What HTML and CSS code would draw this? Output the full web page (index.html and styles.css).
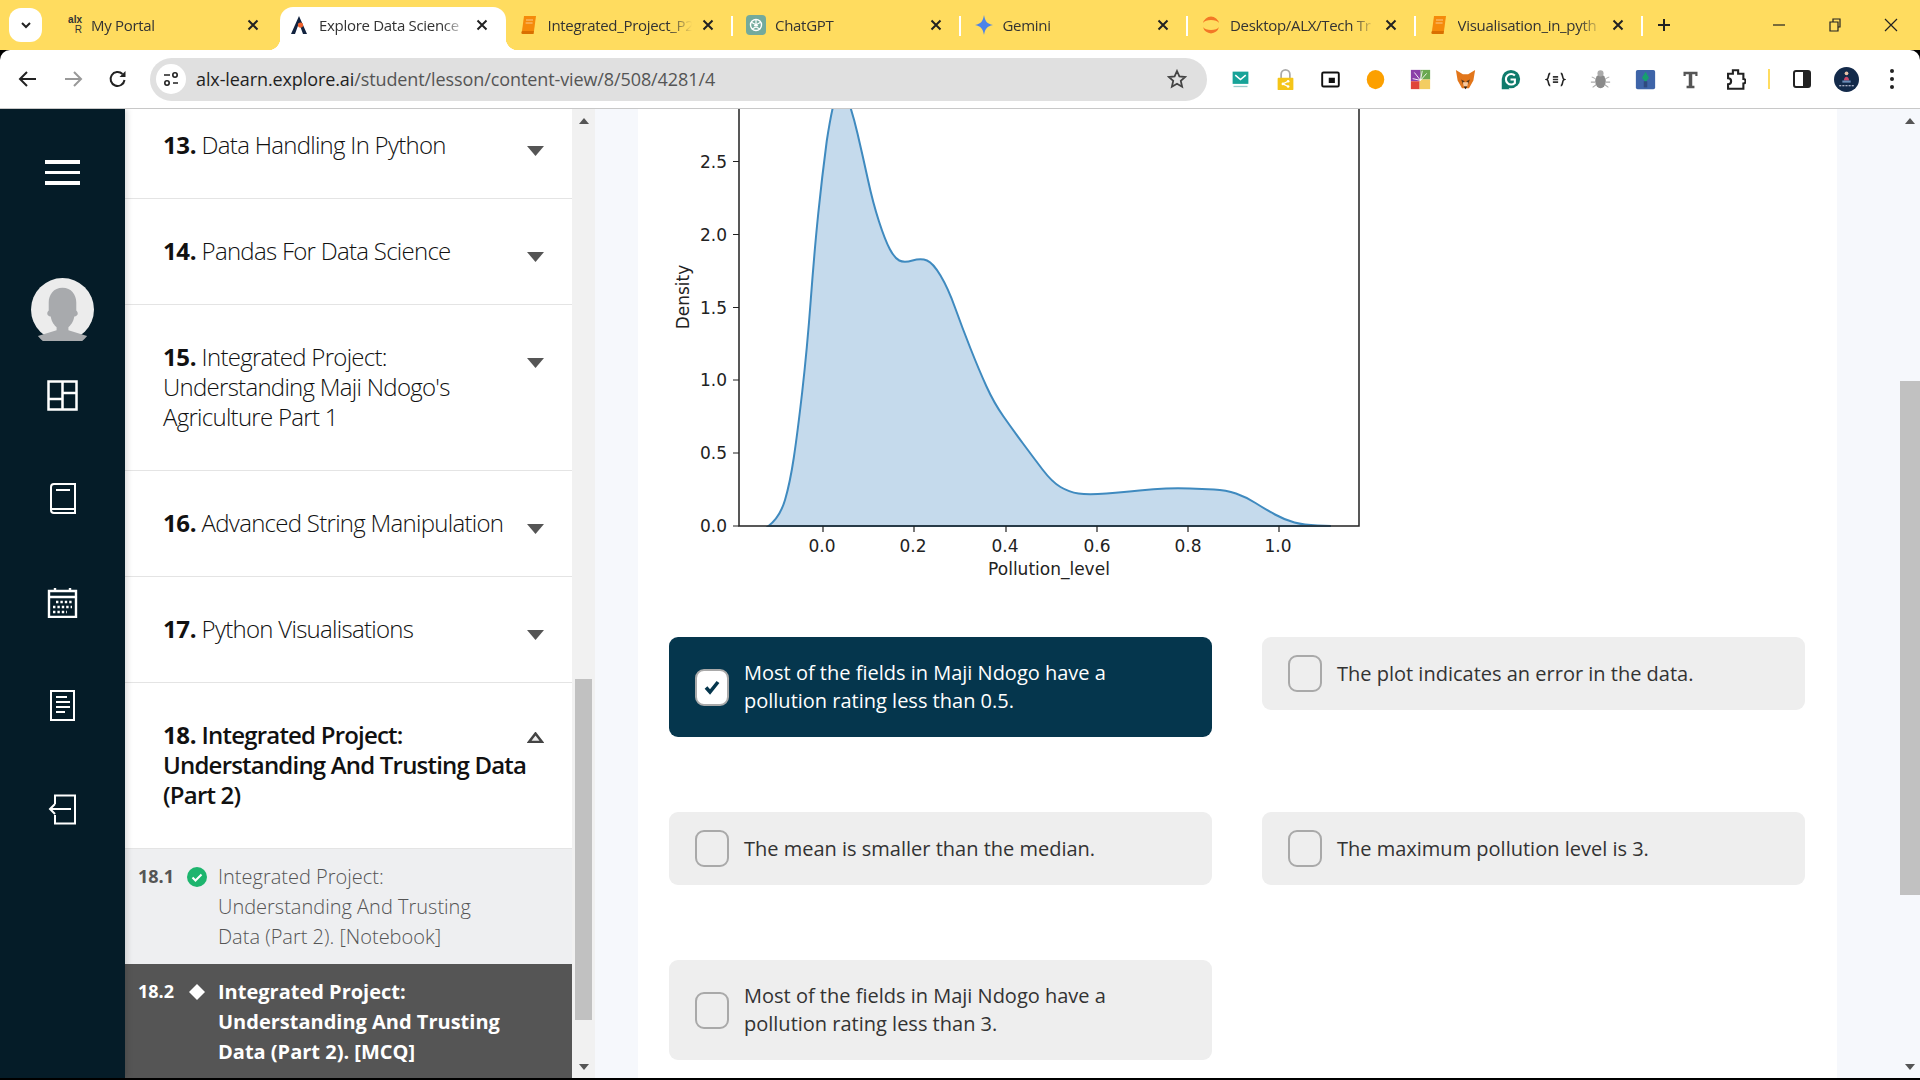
FILE: index.html
```html
<!DOCTYPE html>
<html lang="en">
<head>
  <meta charset="utf-8" />
  <title>Explore Data Science</title>
  <link rel="stylesheet" href="styles.css">
</head>
<body>

  <!-- browser tabs -->
  <div class="tabstrip">
    <div class="tab-search"><svg width="14" height="14" viewBox="0 0 14 14"><path d="M3 5l4 4 4-4" fill="none" stroke="#222" stroke-width="2"/></svg></div>

    <div class="tab tab-first">
      <span class="fav fav-alx"><b>alx</b><i>R</i></span>
      <span class="tab-title">My Portal</span>
      <svg class="tab-x" viewBox="0 0 12 12"><path d="M1.5 1.5l9 9M10.5 1.5l-9 9"/></svg>
    </div>
    <div class="tab tab-active">
      <svg class="fav" viewBox="0 0 20 20"><path d="M10 1L2 19h4l4-11 4 11h4z" fill="#12233f"/><circle cx="11.5" cy="10" r="2.6" fill="#f0622d"/></svg>
      <span class="tab-title">Explore Data Science</span>
      <svg class="tab-x" viewBox="0 0 12 12"><path d="M1.5 1.5l9 9M10.5 1.5l-9 9"/></svg>
    </div>
    <div class="tab">
      <svg class="fav" viewBox="0 0 20 20"><path d="M5 1h12l-2 15H3z" fill="#f58a0b"/><path d="M3 16h12l-.4 3H3.5c-1.2 0-1.6-1.6-.5-3z" fill="#d96f00"/><path d="M7 5h7M6.6 8h7" stroke="#fbc98a" stroke-width="1"/></svg>
      <span class="tab-title">Integrated_Project_P2</span>
      <svg class="tab-x" viewBox="0 0 12 12"><path d="M1.5 1.5l9 9M10.5 1.5l-9 9"/></svg>
    </div>
    <span class="tab-sep"></span>
    <div class="tab">
      <svg class="fav" viewBox="0 0 20 20"><rect x="0" y="0" width="20" height="20" rx="4" fill="#74aa9c"/><circle cx="10" cy="10" r="5.5" fill="none" stroke="#fff" stroke-width="1.4"/><path d="M10 4v8M5 7l7 4M15 7l-7 4M6 14l4-2 4 2" fill="none" stroke="#fff" stroke-width="1.2"/></svg>
      <span class="tab-title">ChatGPT</span>
      <svg class="tab-x" viewBox="0 0 12 12"><path d="M1.5 1.5l9 9M10.5 1.5l-9 9"/></svg>
    </div>
    <span class="tab-sep"></span>
    <div class="tab">
      <svg class="fav" viewBox="0 0 20 20"><path d="M10 0c1 6 3 9 9 10-6 1-8 4-9 10-1-6-3-9-9-10 6-1 8-4 9-10z" fill="#4b83e8"/></svg>
      <span class="tab-title">Gemini</span>
      <svg class="tab-x" viewBox="0 0 12 12"><path d="M1.5 1.5l9 9M10.5 1.5l-9 9"/></svg>
    </div>
    <span class="tab-sep"></span>
    <div class="tab">
      <svg class="fav" viewBox="0 0 20 20"><path d="M2 8a8.2 8.2 0 0 1 16 0c-2-4-14-4-16 0z" fill="#f37726"/><path d="M2 12a8.2 8.2 0 0 0 16 0c-2 4-14 4-16 0z" fill="#f37726"/></svg>
      <span class="tab-title">Desktop/ALX/Tech Tr</span>
      <svg class="tab-x" viewBox="0 0 12 12"><path d="M1.5 1.5l9 9M10.5 1.5l-9 9"/></svg>
    </div>
    <span class="tab-sep"></span>
    <div class="tab">
      <svg class="fav" viewBox="0 0 20 20"><path d="M5 1h12l-2 15H3z" fill="#f58a0b"/><path d="M3 16h12l-.4 3H3.5c-1.2 0-1.6-1.6-.5-3z" fill="#d96f00"/><path d="M7 5h7M6.6 8h7" stroke="#fbc98a" stroke-width="1"/></svg>
      <span class="tab-title">Visualisation_in_pyth</span>
      <svg class="tab-x" viewBox="0 0 12 12"><path d="M1.5 1.5l9 9M10.5 1.5l-9 9"/></svg>
    </div>
    <span class="tab-sep"></span>
    <svg class="tab-plus" viewBox="0 0 14 14"><path d="M7 1v12M1 7h12"/></svg>

    <div class="win-btns">
      <svg viewBox="0 0 14 14"><path d="M1 7h12"/></svg>
      <svg viewBox="0 0 14 14"><path d="M2 4h8v9H2zM5 4V1h7v8h-2"/></svg>
      <svg viewBox="0 0 14 14"><path d="M1 1l12 12M13 1L1 13"/></svg>
    </div>
  </div>

  <!-- address bar -->
  <div class="toolbar">
    <svg class="nav-btn" viewBox="0 0 20 20"><path d="M18 10H3M9 3l-7 7 7 7" fill="none" stroke="#222" stroke-width="2"/></svg>
    <svg class="nav-btn" viewBox="0 0 20 20"><path d="M2 10h15M11 3l7 7-7 7" fill="none" stroke="#999" stroke-width="2"/></svg>
    <svg class="nav-btn" viewBox="0 0 20 20"><path d="M16.5 11a7 7 0 1 1-2-6" fill="none" stroke="#222" stroke-width="2"/><path d="M17.5 2v6h-6z" fill="#222"/></svg>
    <div class="omnibox">
      <span class="site-info"><svg width="18" height="18" viewBox="0 0 18 18"><path d="M2 5h6M11 13h5" stroke="#222" stroke-width="1.6"/><circle cx="13" cy="5" r="2.2" fill="none" stroke="#222" stroke-width="1.6"/><circle cx="5" cy="13" r="2.2" fill="none" stroke="#222" stroke-width="1.6"/></svg></span>
      <span class="url"><span class="url-host">alx-learn.explore.ai</span>/student/lesson/content-view/8/508/4281/4</span>
      <svg class="star" viewBox="0 0 20 20"><path d="M10 2l2.4 5.4 5.8.6-4.4 3.9 1.3 5.8L10 14.7l-5.1 3 1.3-5.8L1.800 8l5.800-.6z" fill="none" stroke="#444" stroke-width="1.8"/></svg>
    </div>
    <div class="exts">
      <svg class="ext" viewBox="0 0 24 24"><rect x="3" y="3" width="18" height="14" fill="#17a398"/><path d="M6 7l6 5 6-5" fill="none" stroke="#fff" stroke-width="1.8"/><path d="M4 20h16" stroke="#9cc" stroke-width="1.5"/></svg>
      <svg class="ext" viewBox="0 0 24 24"><path d="M7 11V6a5 5 0 0 1 10 0v5" fill="none" stroke="#aaa" stroke-width="2"/><rect x="3" y="10" width="18" height="14" rx="1" fill="#f5c518"/><path d="M9 17l6-3M9 17l6 3" stroke="#fff" stroke-width="1.300"/><circle cx="9" cy="17" r="1.500" fill="#fff"/><circle cx="15" cy="14" r="1.500" fill="#fff"/><circle cx="15" cy="20" r="1.500" fill="#fff"/></svg>
      <svg class="ext" viewBox="0 0 24 24"><rect x="2.500" y="4" width="19" height="16" rx="1.500" fill="none" stroke="#111" stroke-width="2.200"/><rect x="10" y="10" width="7" height="6" fill="#111"/></svg>
      <svg class="ext" viewBox="0 0 24 24"><ellipse cx="12" cy="12" rx="10" ry="11" fill="#fca000"/></svg>
      <svg class="ext" viewBox="0 0 24 24"><rect x="1" y="1" width="11" height="13" fill="#8b3fa8"/><rect x="12" y="1" width="11" height="11" fill="#6aa84f"/><rect x="1" y="14" width="10" height="9" fill="#e0453a"/><rect x="11" y="12" width="12" height="11" fill="#f3cd62"/><path d="M12 13L5 4M12 13l2-11M12 13l7-8M12 13L3 11" stroke="#fff" stroke-width="1"/></svg>
      <svg class="ext" viewBox="0 0 24 24"><path d="M1 1l8 5h6l8-5-2 12-5 9h-8l-5-9z" fill="#e2761b"/><path d="M7 12l4 2-2 3zM17 12l-4 2 2 3z" fill="#5a3a1c"/><path d="M9 15h6l-1 5h-4z" fill="#f4c9a0"/><path d="M10 20h4l-2 3z" fill="#222"/></svg>
      <svg class="ext" viewBox="0 0 24 24"><circle cx="12.500" cy="11.500" r="10.500" fill="#0f7b6c"/><path d="M2 12v11h9z" fill="#0f7b6c"/><path d="M17 7.500a6 6 0 1 0 0 8.500v-4h-5" fill="none" stroke="#fff" stroke-width="2.400"/></svg>
      <svg class="ext" viewBox="0 0 24 24"><path d="M6 5C3 5 5 11 2 12c3 1 1 7 4 7M18 5c3 0 1 6 4 7-3 1-1 7-4 7" fill="none" stroke="#222" stroke-width="1.800"/><path d="M9 9h6M9 12h6M9 15h6" stroke="#333" stroke-width="1.800"/></svg>
      <svg class="ext" viewBox="0 0 24 24"><ellipse cx="12" cy="14" rx="6" ry="8" fill="#8a8a8a"/><circle cx="12" cy="5" r="3.500" fill="#aaa"/><path d="M2 9l4 2M22 9l-4 2M1 15h5M23 15h-5M3 21l4-3M21 21l-4-3" stroke="#aaa" stroke-width="1.200"/></svg>
      <svg class="ext" viewBox="0 0 24 24"><rect x="1" y="1" width="22" height="22" rx="2" fill="#3e64a8"/><path d="M12 3l4 7-4 5-4-5z" fill="#16a06e"/><rect x="10" y="14" width="4" height="7" fill="#2f4a7e"/></svg>
      <svg class="ext" viewBox="0 0 24 24"><path d="M4 3h16v5h-2.500V6H14v13h2.500v3h-9v-3H10V6H6.500v2H4z" fill="#555"/></svg>
      <svg class="ext" viewBox="0 0 24 24"><path d="M9 1.500h6v4h6v6a2.500 2.500 0 0 1 0 5v6H3.500v-5a3.500 3.500 0 0 0 0-7v-5H9z" fill="none" stroke="#222" stroke-width="2.400"/></svg>
    </div>
    <span class="ext-sep"></span>
    <svg class="side-panel" viewBox="0 0 18 18"><rect x="1" y="1" width="16" height="16" rx="2" fill="none" stroke="#222" stroke-width="2"/><rect x="10" y="1" width="7" height="16" fill="#222"/></svg>
    <svg class="profile" viewBox="0 0 24 24"><circle cx="12" cy="12" r="12" fill="#132a4a"/><circle cx="12" cy="6" r="1.800" fill="#e8c3a8"/><path d="M9.500 13c0-5 5-5 5 0z" fill="#c9476a"/><path d="M8 13h8v2H8z" fill="#6c8fb8"/><path d="M5 18h14" stroke="#dde" stroke-width="1" stroke-dasharray="2 1"/></svg>
    <svg class="kebab" viewBox="0 0 4 20"><circle cx="2" cy="2" r="2"/><circle cx="2" cy="10" r="2"/><circle cx="2" cy="18" r="2"/></svg>
  </div>

  <div class="app">
    <nav class="sidebar">
      <div class="burger"><span></span><span></span><span></span></div>
      <svg class="avatar" viewBox="0 0 64 64"><circle cx="32" cy="32" r="32" fill="#ececec"/><path d="M32 10c-9 0-14 7-14 15v8c-3 3-1 6 2 6 1 6 4 9 6 11v3L7 59a32 32 0 0 0 50 0l-19-6v-3c2-2 5-5 6-11 3 0 5-3 2-6v-8c0-8-5-15-14-15z" fill="#a8aaad"/></svg>
      <div class="nav-icons">
        <svg viewBox="0 0 31 31"><path d="M1.500 1.500h28v28h-28zM15.500 1.500v28M1.500 19h14M15.500 13h14" fill="none" stroke="#fff" stroke-width="2.500"/></svg>
        <svg viewBox="0 0 31 31"><path d="M4 4a3 3 0 0 1 3-3h21v29H7a3 3 0 0 1-3-3zM4 26h24M9 7h14" fill="none" stroke="#fff" stroke-width="2"/></svg>
        <svg viewBox="0 0 31 31"><path d="M2 4h27v26H2zM2 10h27M8 1v4M23 1v4" fill="none" stroke="#fff" stroke-width="2.400"/><path d="M9 15h16M6 20h19M6 25h14" stroke="#fff" stroke-width="2.400" stroke-dasharray="2.400 2"/></svg>
        <svg viewBox="0 0 31 31"><path d="M4 1h23v29H4zM9 7h11M9 12h14M9 17h14M9 22h9" fill="none" stroke="#fff" stroke-width="2"/></svg>
        <svg viewBox="0 0 31 31"><path d="M8 10V1.500h20v28H8V21M24 15H3M8 10l-5 5 5 5" fill="none" stroke="#fff" stroke-width="2"/></svg>
      </div>
    </nav>

    <aside class="lessons">
      <div class="lesson">
        <div class="lesson-title"><b>13.</b> Data Handling In Python</div>
        <svg class="caret" viewBox="0 0 17 10"><path d="M0 0h17l-8.500 10z"/></svg>
      </div>
      <div class="lesson">
        <div class="lesson-title"><b>14.</b> Pandas For Data Science</div>
        <svg class="caret" viewBox="0 0 17 10"><path d="M0 0h17l-8.500 10z"/></svg>
      </div>
      <div class="lesson">
        <div class="lesson-title"><b>15.</b> Integrated Project: Understanding Maji Ndogo's Agriculture Part 1</div>
        <svg class="caret" viewBox="0 0 17 10"><path d="M0 0h17l-8.500 10z"/></svg>
      </div>
      <div class="lesson">
        <div class="lesson-title"><b>16.</b> Advanced String Manipulation</div>
        <svg class="caret" viewBox="0 0 17 10"><path d="M0 0h17l-8.500 10z"/></svg>
      </div>
      <div class="lesson">
        <div class="lesson-title"><b>17.</b> Python Visualisations</div>
        <svg class="caret" viewBox="0 0 17 10"><path d="M0 0h17l-8.500 10z"/></svg>
      </div>
      <div class="lesson lesson-open">
        <div class="lesson-title"><b>18.</b> Integrated Project: Understanding And Trusting Data (Part 2)</div>
        <svg class="caret caret-up" viewBox="0 0 17 11"><path d="M8.500 1.500L15 10H2z" fill="#eee" stroke="#444" stroke-width="2.500"/></svg>
      </div>
      <div class="sub sub-done">
        <span class="sub-num">18.1</span>
        <svg class="sub-icon" viewBox="0 0 20 20"><circle cx="10" cy="10" r="10" fill="#1db56e"/><path d="M5.500 10.500l3 3 6-6" fill="none" stroke="#fff" stroke-width="2"/></svg>
        <span class="sub-text">Integrated Project: Understanding And Trusting Data (Part 2). [Notebook]</span>
      </div>
      <div class="sub sub-current">
        <span class="sub-num">18.2</span>
        <svg class="sub-icon" viewBox="0 0 20 20"><path d="M10 2l8 8-8 8-8-8z" fill="#fff"/></svg>
        <span class="sub-text">Integrated Project: Understanding And Trusting Data (Part 2). [MCQ]</span>
      </div>
    </aside>
    <div class="scrollbar scrollbar-list">
      <span class="arrow-up"></span>
      <span class="thumb"></span>
      <span class="arrow-down"></span>
    </div>

    <main class="main">
      <section class="panel">
        <svg class="chart" viewBox="638 109 1199 482">
          <path class="kde-fill" d="M768.500 526 Q780 517 785 500 Q790 483 793.750 458 Q797.500 433 802.250 391.500 Q807 350 810.750 300 Q814.500 250 818.250 213.500 Q822 177 826.750 141 Q831.500 110 836 95 Q841 84 846 95 Q852 110 857.500 133.500 Q863 157 868 180 Q873 203 879 221.500 Q885 240 889.750 249 Q894.500 258 899.250 260.500 Q904 263 912.500 260.500 Q921 258 927 260.500 Q933 263 940.500 275.500 Q948 288 955 307.500 Q962 327 970.500 348.500 Q979 370 986.500 386.500 Q994 403 1003.500 416.500 Q1013 430 1023 443.500 Q1033 457 1042.500 469.500 Q1052 482 1060.500 487 Q1069 492 1078.500 493.500 Q1088 495 1106.500 493.500 Q1125 492 1139.500 490.500 Q1154 489 1166 488.500 Q1178 488 1190 488.500 Q1202 489 1214 489.500 Q1226 490 1236 493.500 Q1246 497 1255.500 503 Q1265 509 1275 514.500 Q1285 520 1294.500 522.500 Q1304 525 1317.500 525.500 L1331 526 Z"/>
          <path class="axes" d="M739 109V526H1359V109"/>
          <path class="ticks" d="M733 161.500h6M733 234.500h6M733 307.500h6M733 380h6M733 453h6M733 526h6M823 526v6M914 526v6M1006 526v6M1097 526v6M1188 526v6M1279 526v6"/>
          <g class="tick-y">
            <text x="727" y="167.500">2.5</text>
            <text x="727" y="240.500">2.0</text>
            <text x="727" y="313.500">1.5</text>
            <text x="727" y="386">1.0</text>
            <text x="727" y="459">0.5</text>
            <text x="727" y="532">0.0</text>
          </g>
          <g class="tick-x">
            <text x="822" y="552">0.0</text>
            <text x="913" y="552">0.2</text>
            <text x="1005" y="552">0.4</text>
            <text x="1097" y="552">0.6</text>
            <text x="1188" y="552">0.8</text>
            <text x="1278" y="552">1.0</text>
          </g>
          <text class="axis-label" x="1049" y="575">Pollution_level</text>
          <text class="axis-label" transform="translate(689 297) rotate(-90)">Density</text>
        </svg>

        <div class="answers">
          <div class="answer answer-on">
            <span class="box"><svg width="18" height="18" viewBox="0 0 18 18"><path d="M3 9.500l4 4.500 8-10" fill="none" stroke="#05364d" stroke-width="3.600"/></svg></span>
            <span class="answer-text">Most of the fields in Maji Ndogo have a pollution rating less than 0.5.</span>
          </div>
          <div class="answer">
            <span class="box"></span>
            <span class="answer-text">The plot indicates an error in the data.</span>
          </div>
          <div class="answer">
            <span class="box"></span>
            <span class="answer-text">The mean is smaller than the median.</span>
          </div>
          <div class="answer">
            <span class="box"></span>
            <span class="answer-text">The maximum pollution level is 3.</span>
          </div>
          <div class="answer">
            <span class="box"></span>
            <span class="answer-text">Most of the fields in Maji Ndogo have a pollution rating less than 3.</span>
          </div>
        </div>
      </section>
      <div class="scrollbar scrollbar-main">
        <span class="arrow-up"></span>
        <span class="thumb"></span>
        <span class="arrow-down"></span>
      </div>
    </main>
  </div>

</body>
</html>
```

FILE: styles.css
```css
html, body { margin: 0; padding: 0; }
body { width: 1920px; height: 1080px; overflow: hidden; display: flex; flex-direction: column; background: #000; font-family: 'Open Sans', 'Liberation Sans', Arial, sans-serif; color: #111; }

/* tab strip */
.tabstrip { height: 50px; flex: none; display: flex; align-items: flex-end; background: #ffdc5f; padding-left: 9px; box-sizing: border-box; }
.tab-search { width: 33px; height: 34px; margin-bottom: 8px; margin-right: 6px; background: #fff; border-radius: 12px; display: flex; align-items: center; justify-content: center; }
.tab { width: 225.5px; height: 43px; display: flex; align-items: center; padding: 0 17px 7px 13px; box-sizing: border-box; position: relative; }
.tab-first { width: 232px; padding-left: 14px; padding-right: 21px; }
.tab-active { background: #fff; border-radius: 13px 13px 0 0; padding-left: 9px; padding-right: 18px; }
.tab-active::before, .tab-active::after { content: ""; position: absolute; bottom: 0; width: 12px; height: 12px; }
.tab-active::before { left: -12px; background: radial-gradient(circle at 0 0, #ffdc5f 12px, #fff 12.5px); }
.tab-active::after { right: -12px; background: radial-gradient(circle at 100% 0, #ffdc5f 12px, #fff 12.5px); }
.fav { width: 20px; height: 20px; flex: none; margin-right: 9px; }
.fav-alx { display: flex; flex-direction: column; align-items: flex-end; margin-left: 0; margin-right: 8px; font: 700 10px/10px 'Liberation Sans', Arial, sans-serif; color: #333; }
.fav-alx i { font-style: normal; font-weight: 400; }
.tab-title { flex: 1; min-width: 0; white-space: nowrap; overflow: hidden; font-size: 15px; letter-spacing: -0.3px; color: #333; -webkit-mask-image: linear-gradient(to right, #000 84%, transparent 100%); mask-image: linear-gradient(to right, #000 84%, transparent 100%); }
.tab-first .tab-title, .tab-active .tab-title { margin-left: 1px; }
.tab-x { width: 12px; height: 12px; flex: none; margin-left: 10px; fill: none; stroke: #222; stroke-width: 2; }
.tab-sep { width: 2px; height: 20px; margin-bottom: 14px; background: #fff; flex: none; }
.tab-plus { width: 14px; height: 14px; margin: 0 0 18px 14px; fill: none; stroke: #222; stroke-width: 2; flex: none; }
.win-btns { margin-left: auto; display: flex; gap: 42px; padding-right: 22px; margin-bottom: 18px; }
.win-btns svg { width: 14px; height: 14px; fill: none; stroke: #222; stroke-width: 1.2; }

/* address bar */
.toolbar { height: 59px; flex: none; box-sizing: border-box; display: flex; align-items: center; background: #fff; border-radius: 10px 10px 0 0; border-bottom: 1px solid #c8c8c8; padding: 0 0 0 18px; position: relative; }
.nav-btn { width: 20px; height: 20px; margin-right: 25px; flex: none; }
.nav-btn:nth-child(3) { margin-right: 22px; }
.omnibox { width: 1057px; height: 43px; background: #e0e0e0; border-radius: 22px; display: flex; align-items: center; box-sizing: border-box; padding: 0 20px 0 6px; flex: none; }
.site-info { width: 30px; height: 30px; border-radius: 50%; background: #fff; display: flex; align-items: center; justify-content: center; margin-right: 10px; flex: none; }
.url { flex: 1; font-size: 18px; color: #555; white-space: nowrap; letter-spacing: -0.1px; }
.url-host { color: #1f1f1f; }
.star { width: 20px; height: 20px; flex: none; }
.exts { display: flex; margin-left: 11px; }
.ext { width: 21px; height: 21px; margin: 0 12px; flex: none; }
.ext-sep { width: 1.5px; height: 20px; background: #ffdc5f; margin: 0 23px 0 10px; flex: none; }
.side-panel { width: 18px; height: 18px; flex: none; margin-right: 23px; }
.profile { width: 25px; height: 25px; flex: none; margin-right: 31px; }
.kebab { width: 4px; height: 20px; flex: none; fill: #222; }

/* page */
.app { height: 969px; flex: none; display: flex; background: #f6f8fc; overflow: hidden; }
.sidebar { width: 125px; flex: none; background: #051c28; display: flex; flex-direction: column; align-items: center; padding-top: 51px; box-sizing: border-box; box-shadow: 2px 0 6px rgba(0,0,0,.15); position: relative; }
.burger { width: 35px; display: flex; flex-direction: column; gap: 7px; }
.burger span { height: 3.5px; background: #fff; }
.avatar { width: 63px; height: 63px; margin-top: 93px; }
.nav-icons { display: flex; flex-direction: column; gap: 72.5px; margin-top: 39px; }
.nav-icons svg { width: 31px; height: 31px; display: block; }

/* lesson list */
.lessons { width: 447px; flex: none; background: #fff; overflow: hidden; margin-top: -16px; }
.lesson { display: flex; align-items: flex-start; padding: 37px 28px 38px 38px; border-bottom: 1px solid #e4e4e4; }
.lesson-title { flex: 1; font-size: 24px; line-height: 30px; font-weight: 300; letter-spacing: -0.72px; }
.lesson-title b { font-weight: 700; letter-spacing: -0.4px; }
.caret { width: 17px; height: 10px; flex: none; margin-top: 16px; fill: #555; }
.lesson-open .lesson-title { font-weight: 600; letter-spacing: -0.8px; margin-right: -20px; }
.caret-up { height: 11px; margin-top: 12px; }
.sub { display: flex; align-items: flex-start; padding: 13px 60px 12px 13px; height: 115px; box-sizing: border-box; }
.sub-done { background: #eeeff1; color: #555; }
.sub-current { background: #555; color: #fff; }
.sub-num { width: 49px; flex: none; font-size: 18px; line-height: 28px; font-weight: 700; }
.sub-icon { width: 20px; height: 20px; margin: 5px 11px 0 0; flex: none; }
.sub-text { flex: 1; font-size: 20px; line-height: 30px; font-weight: 300; }
.sub-current .sub-text { font-weight: 700; }

/* scrollbars */
.scrollbar { flex: none; display: flex; flex-direction: column; align-items: center; }
.scrollbar-list { width: 23px; background: #f1f1f1; }
.scrollbar-list .thumb { width: 17px; height: 341px; margin-top: 545px; }
.scrollbar-main { width: 20px; margin-left: 63px; }
.scrollbar-main .thumb { width: 20px; height: 514px; margin-top: 247px; }
.thumb { background: #c1c1c1; display: block; }
.arrow-up, .arrow-down { width: 0; height: 0; border-left: 5px solid transparent; border-right: 5px solid transparent; }
.arrow-up { border-bottom: 6px solid #555; margin-top: 9px; margin-bottom: 10px; }
.arrow-down { border-top: 6px solid #555; margin-top: auto; margin-bottom: 8px; }

/* question */
.main { flex: 1; display: flex; min-width: 0; }
.panel { width: 1199px; margin-left: 43px; background: #fff; flex: none; }
.chart { display: block; width: 1199px; height: 482px; }
.kde-fill { fill: #c5daec; stroke: #3f8abf; stroke-width: 2; }
.axes { fill: none; stroke: #222; stroke-width: 1.5; }
.ticks { fill: none; stroke: #222; stroke-width: 1.2; }
.chart text { font-family: 'DejaVu Sans', sans-serif; font-size: 17px; fill: #222; }
.tick-y text { text-anchor: end; }
.tick-x text { text-anchor: middle; }
.axis-label { text-anchor: middle; }
.answers { display: grid; grid-template-columns: 543px 543px; column-gap: 50px; row-gap: 75px; padding: 46px 32px 0 31px; align-items: start; }
.answer { display: flex; align-items: center; gap: 15.5px; padding: 18px 25.5px; background: #eee; border-radius: 9px; color: #333; font-size: 20px; line-height: 28px; }
.answer-on { background: #05364d; color: #fff; }
.box { width: 34px; height: 37px; flex: none; box-sizing: border-box; border: 2px solid #a9a9a9; border-radius: 9px; display: flex; align-items: center; justify-content: center; }
.answer-on .box { background: #fff; }
.answer-text { padding: 4px 0; }
```
